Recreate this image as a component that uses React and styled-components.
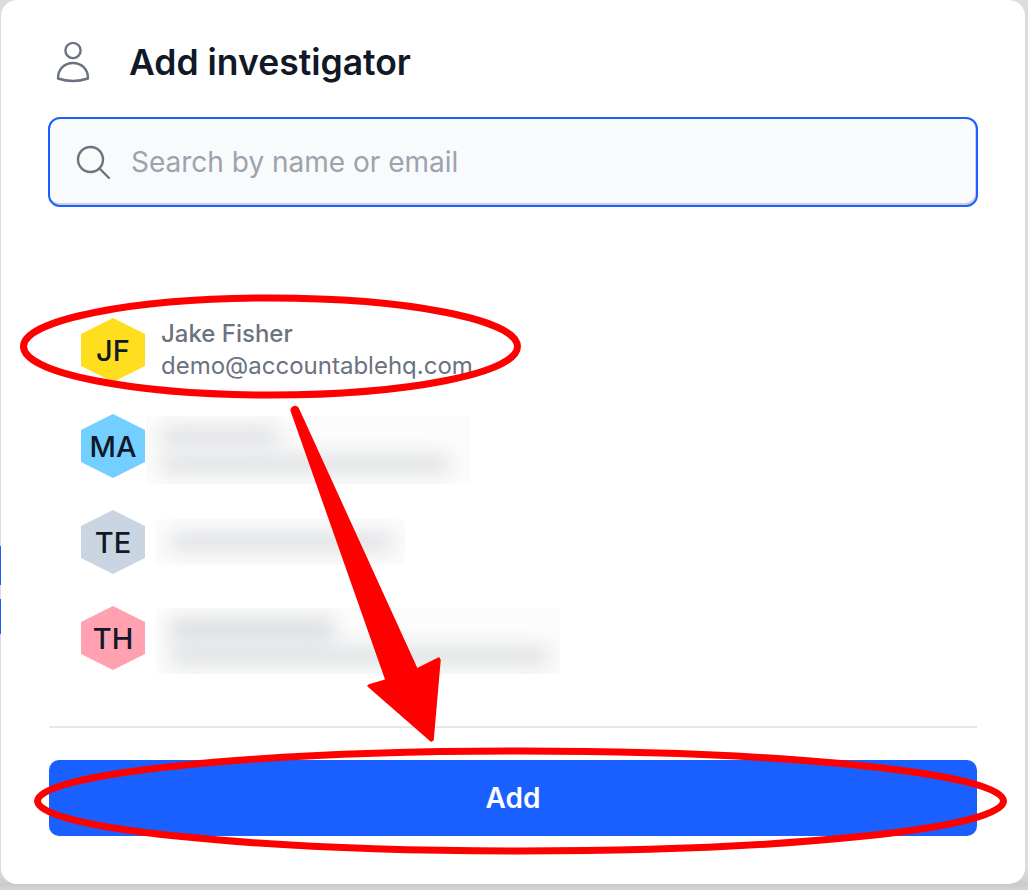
import React from "react";
import styled, { createGlobalStyle } from "styled-components";

const GlobalStyle = createGlobalStyle`
  html, body {
    margin: 0;
    padding: 0;
    background: #d6d6d7;
    font-family: Inter, "Liberation Sans", sans-serif;
  }
`;

const Page = styled.div`
  position: relative;
  width: 1028px;
  height: 890px;
  overflow: hidden;
  background: linear-gradient(to bottom, #dcdcdc 0, #dcdcdc 870px, #cbcbcc 884px, #d4d4d5 890px);
`;

const BackdropSliver = styled.div`
  position: absolute;
  left: 0;
  top: ${(props) => props.top}px;
  width: 1px;
  height: ${(props) => props.size}px;
  background: #1a5fff;
`;

const Dialog = styled.div`
  position: relative;
  box-sizing: border-box;
  width: 1024px;
  height: 884px;
  margin-left: 1px;
  padding: 34px 48px 0;
  background: #fff;
  border-radius: 16px;
`;

const Header = styled.div`
  display: flex;
  align-items: center;
  height: 56px;
  padding-left: 7px;
  gap: 39px;
  margin-bottom: 27px;
`;

const Title = styled.h1`
  margin: 0;
  font-size: 35.5px;
  font-weight: 600;
  color: #111827;
`;

const SearchBox = styled.div`
  box-sizing: border-box;
  display: flex;
  align-items: center;
  height: 90px;
  margin: 0 -1px;
  padding-left: 26px;
  gap: 21px;
  background: #f9fafb;
  border: 2.5px solid #1a5fff;
  border-radius: 12px;
  box-shadow: inset -1px -2px 0 #cfd0d4;
`;

const Placeholder = styled.span`
  font-size: 28px;
  color: #9ca3af;
`;

const List = styled.div`
  display: flex;
  flex-direction: column;
  gap: 32px;
  margin: 111px 0 0 32px;
`;

const Row = styled.div`
  display: flex;
  align-items: center;
  height: 64px;
  gap: 16px;
`;

const Hexagon = styled.div`
  flex: none;
  display: flex;
  align-items: center;
  justify-content: center;
  width: 64px;
  height: 64px;
  clip-path: polygon(50% 0, 100% 25%, 100% 75%, 50% 100%, 0 75%, 0 25%);
  background: ${(props) => props.color};
  font-size: 29px;
  font-weight: 500;
  color: #111827;
`;

const Person = styled.div`
  display: flex;
  flex-direction: column;
  font-size: 24px;
  line-height: 32px;
  color: #6b7280;
`;

const PersonName = styled.span`
  font-weight: 500;
`;

const BlurPatch = styled.div`
  box-sizing: border-box;
  display: flex;
  flex-direction: column;
  justify-content: center;
  gap: ${(props) => props.gap || 0}px;
  flex: none;
  width: ${(props) => props.width}px;
  height: ${(props) => props.height}px;
  margin-left: ${(props) => props.shift}px;
  margin-top: ${(props) => props.drop || 0}px;
  padding-left: 14px;
  overflow: hidden;
  background: #fcfcfc;
`;

const BlurLine = styled.div`
  width: ${(props) => props.width}px;
  height: ${(props) => props.height}px;
  flex: none;
  background: #dcdee1;
  border-radius: 8px;
  filter: blur(10px);
`;

const Divider = styled.div`
  height: 2px;
  margin-top: 56px;
  background: #e5e7eb;
`;

const AddButton = styled.button`
  display: block;
  width: 100%;
  height: 76px;
  margin-top: 32px;
  border: 0;
  border-radius: 10px;
  background: #1a5fff;
  font-family: inherit;
  font-size: 28px;
  font-weight: 600;
  color: #fff;
`;

const Annotations = styled.svg`
  position: absolute;
  left: 0;
  top: 0;
  pointer-events: none;
`;

const UserIcon = () => (
  <svg width="34" height="42" viewBox="0 0 34 42" fill="none" stroke="#6b7280" strokeWidth="2.4">
    <circle cx="17" cy="9.5" r="7.6" />
    <path d="M2 37.5C2 28 8.5 22 17 22s15 6 15 15.500C27.500 39 22.500 40 17 40S6.500 39 2 37.500Z" strokeLinejoin="round" />
  </svg>
);

const SearchIcon = () => (
  <svg width="34" height="34" viewBox="0 0 34 34" fill="none" stroke="#6b7280" strokeWidth="2.4" strokeLinecap="round">
    <circle cx="14.500" cy="14.500" r="12.500" />
    <path d="M24 24l9 9" />
  </svg>
);

export default function App() {
  return (
    <Page>
      <GlobalStyle />
      <BackdropSliver top={546} size={39} />
      <BackdropSliver top={599} size={35} />
      <Dialog>
        <Header>
          <UserIcon />
          <Title>Add investigator</Title>
        </Header>
        <SearchBox>
          <SearchIcon />
          <Placeholder>Search by name or email</Placeholder>
        </SearchBox>
        <List>
          <Row>
            <Hexagon color="#ffdd1f">JF</Hexagon>
            <Person>
              <PersonName>Jake Fisher</PersonName>
              <span>demo@accountablehq.com</span>
            </Person>
          </Row>
          <Row>
            <Hexagon color="#73cfff">MA</Hexagon>
            <BlurPatch width={324} height={68} shift={-15} drop={8} gap={10}>
              <BlurLine width={120} height={18} />
              <BlurLine width={290} height={18} />
            </BlurPatch>
          </Row>
          <Row>
            <Hexagon color="#cad5e2">TE</Hexagon>
            <BlurPatch width={250} height={46} shift={-6}>
              <BlurLine width={225} height={18} />
            </BlurPatch>
          </Row>
          <Row>
            <Hexagon color="#ffa1b1">TH</Hexagon>
            <BlurPatch width={404} height={66} shift={-5} drop={6} gap={4}>
              <BlurLine width={165} height={26} />
              <BlurLine width={380} height={18} />
            </BlurPatch>
          </Row>
        </List>
        <Divider />
        <AddButton>Add</AddButton>
      </Dialog>
      <Annotations width="1028" height="890" viewBox="0 0 1028 890">
        <ellipse cx="270.500" cy="346.500" rx="247" ry="48.500" fill="none" stroke="#ff0000" strokeWidth="7" />
        <ellipse cx="520.500" cy="801" rx="483" ry="50" fill="none" stroke="#ff0000" strokeWidth="7" />
        <path
          d="M291 410a4 4 0 0 1 7-2L417 669l22-11 1 2-7 80-2 1-63-55 1-1 17-5Z"
          fill="#ff0000"
          stroke="#ff0000"
          strokeWidth="1.500"
          strokeLinejoin="round"
        />
      </Annotations>
    </Page>
  );
}
